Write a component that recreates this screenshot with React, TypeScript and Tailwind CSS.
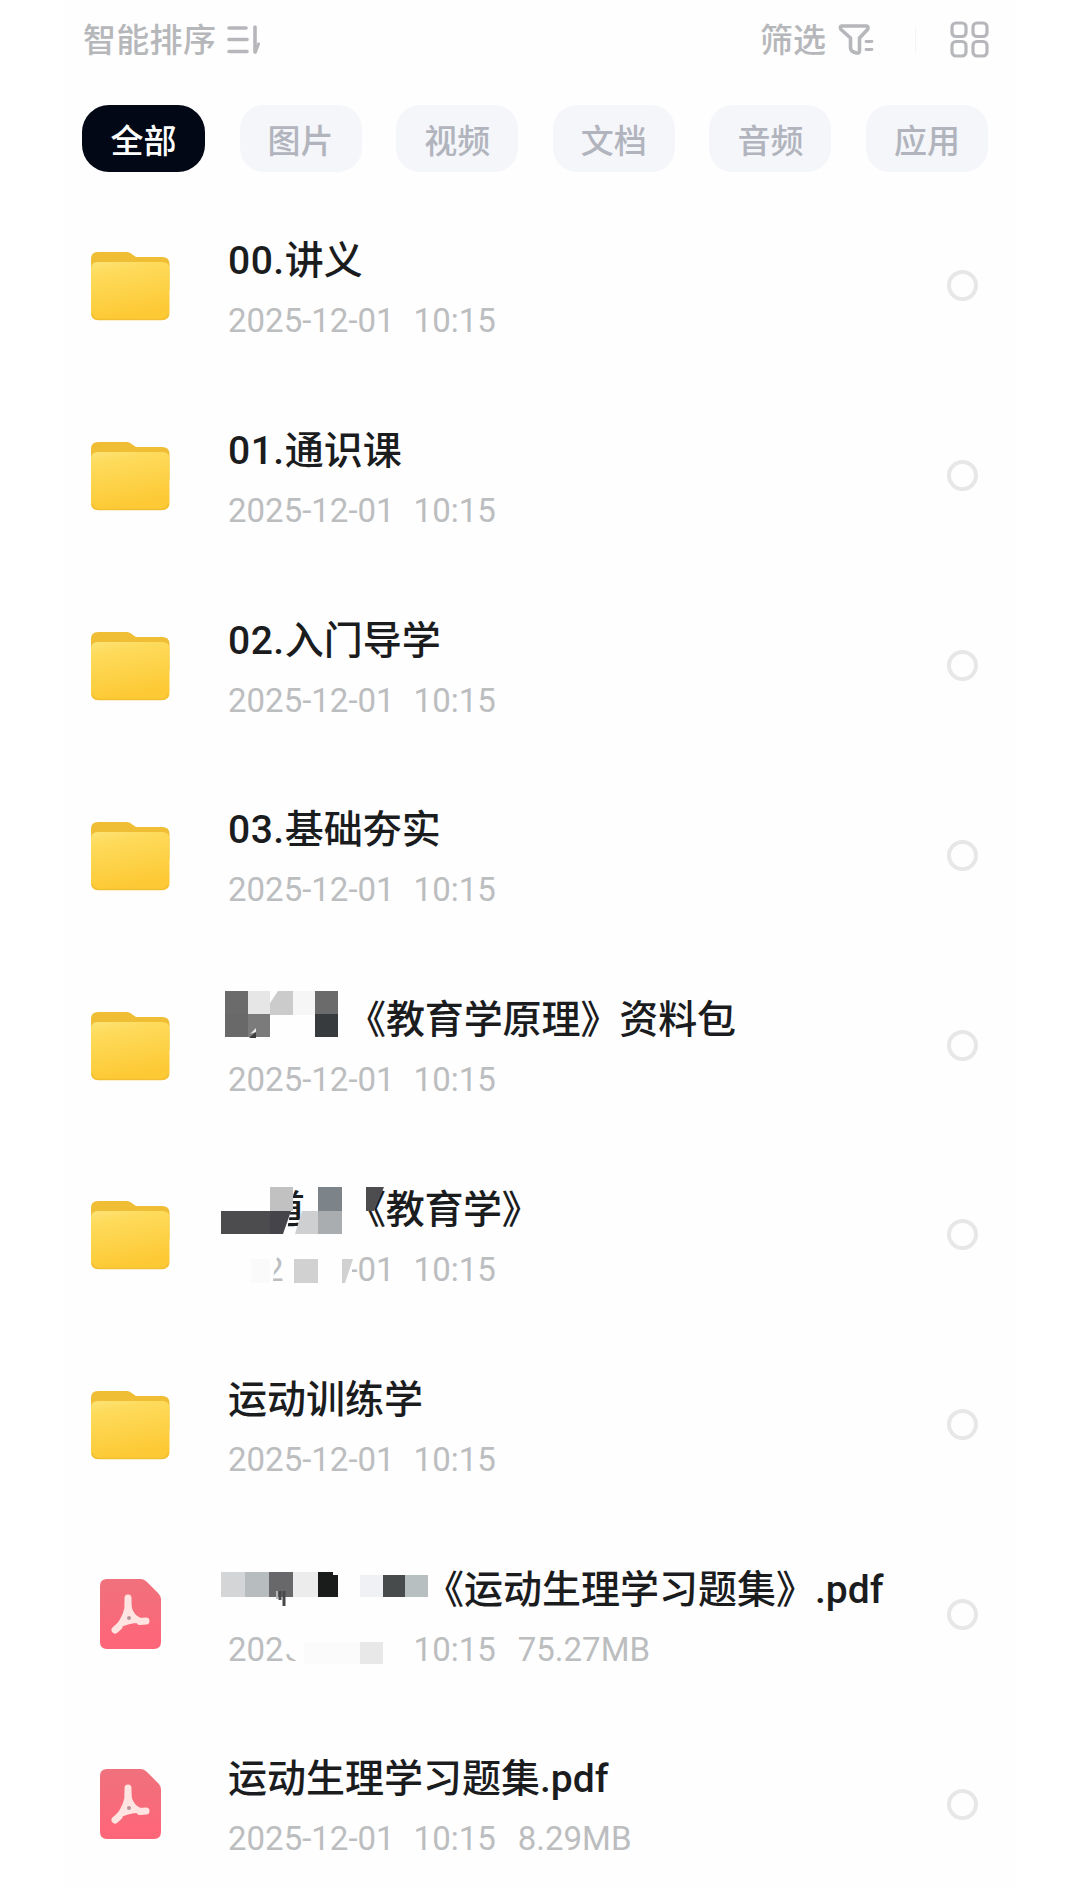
import type { ReactNode } from "react";
import clsx from "clsx";

interface FileItem {
  type: "folder" | "pdf";
  name: ReactNode;
  time: string;
  size?: string;
  cover?: ReactNode;
}

const TABS = ["全部", "图片", "视频", "文档", "音频", "应用"];

function SortIcon() {
  return (
    <svg width="36" height="32" viewBox="0 0 36 32" fill="none" stroke="#b6b7ba" strokeWidth="3.6" strokeLinecap="round">
      <path d="M3 4H20M3 15.5H21M3 27.5H21" />
      <path d="M29 3V28" />
      <path d="M29.5 28L32.5 20" strokeWidth="3" />
    </svg>
  );
}

function FilterIcon() {
  return (
    <svg width="38" height="34" viewBox="0 0 38 34" fill="none" stroke="#b6b7ba" strokeWidth="3.6" strokeLinecap="round" strokeLinejoin="round">
      <path d="M3.5 3H28.5Q31 3.5 29.5 6.5L21.5 15V27.5Q21.5 30.5 18.5 30Q12.5 28.5 12.5 25V15L3 6.5Q1.5 3.5 3.5 3Z" />
      <path d="M28 18.5H34M28 26.5H34" strokeWidth="2.8" />
    </svg>
  );
}

function GridIcon() {
  return (
    <svg width="40" height="38" viewBox="0 0 40 38" fill="none" stroke="#b6b7ba" strokeWidth="3.2">
      <rect x="2" y="2" width="14" height="13.5" rx="4" />
      <rect x="23" y="2" width="14" height="13.5" rx="4" />
      <rect x="2" y="20.5" width="14" height="14.5" rx="4" />
      <rect x="23" y="20.5" width="14" height="14.5" rx="4" />
    </svg>
  );
}

function FolderIcon() {
  return (
    <svg width="80" height="71" viewBox="0 0 80 71">
      <defs>
        <linearGradient id="folderFront" x1="0" y1="0" x2="0.25" y2="1">
          <stop offset="0" stopColor="#fde377" />
          <stop offset="0.2" stopColor="#fedb5c" />
          <stop offset="1" stopColor="#fdc934" />
        </linearGradient>
      </defs>
      <path d="M1 9Q1 2 8 2H37Q40 2 43 5L46 7H72Q79.500 7 79.500 14V40H1Z" fill="#efbe35" />
      <path d="M1 19Q1 12 8 12H72Q79.500 12 79.500 19V63Q79.500 70 72 70H8Q1 70 1 63Z" fill="url(#folderFront)" />
      <path d="M2 64Q3 69.500 9 69.500H71Q77 69.500 78.500 64" fill="none" stroke="#f3bf32" strokeWidth="1.5" />
    </svg>
  );
}

function PdfIcon() {
  return (
    <svg width="80" height="72" viewBox="0 0 80 72">
      <defs>
        <linearGradient id="pdfSheet" x1="0" y1="0" x2="0" y2="1">
          <stop offset="0" stopColor="#f0717d" />
          <stop offset="1" stopColor="#fe6578" />
        </linearGradient>
      </defs>
      <path d="M10 8Q10 1 17 1H51Q54 1 57 4L68 15Q71 18 71 21V64Q71 71 64 71H17Q10 71 10 64Z" fill="url(#pdfSheet)" />
      <g stroke="#ffe4e1" strokeLinecap="round" strokeLinejoin="round">
        <path d="M38 20V27M25 52L29 48.5M50 43.5L56 43" fill="none" strokeWidth="7" />
        <path d="M37 24Q37 37 27 49Q38 42 54 43Q40 40 39 24Z" fill="#ffe4e1" strokeWidth="4" />
      </g>
      <circle cx="39" cy="40" r="2" fill="#b9959b" />
    </svg>
  );
}

// Pixelated blocks hiding part of a row, drawn from the row's top edge
function Cover({ children }: { children: ReactNode }) {
  return (
    <svg className="absolute -left-2 top-0" width="240" height="190" viewBox="0 0 240 190">
      {children}
    </svg>
  );
}

function Numbered({ no, title }: { no: string; title: string }) {
  return (
    <>
      <span className="tracking-[0.5px]">{no}.</span>
      {title}
    </>
  );
}

const FILES: FileItem[] = [
  { type: "folder", name: <Numbered no="00" title="讲义" />, time: "2025-12-01  10:15" },
  { type: "folder", name: <Numbered no="01" title="通识课" />, time: "2025-12-01  10:15" },
  { type: "folder", name: <Numbered no="02" title="入门导学" />, time: "2025-12-01  10:15" },
  { type: "folder", name: <Numbered no="03" title="基础夯实" />, time: "2025-12-01  10:15" },
  {
    type: "folder",
    name: <span className="pl-[119px] tracking-[-0.1px]">《教育学原理》资料包</span>,
    time: "2025-12-01  10:15",
    cover: (
      <Cover>
        <path d="M5 41h23v24H5z" fill="#6b6b6c" />
        <path d="M28 41h22v24H28z" fill="#e6e6e7" />
        <path d="M58 41h15v24H50V53z" fill="#cbcbcb" />
        <path d="M73 41h22v24H73z" fill="#f6f6f6" />
        <path d="M95 41h23v24H95z" fill="#6b6b6c" />
        <path d="M5 64h23v23H5z" fill="#69696a" />
        <path d="M28 64h22v23H28z" fill="#7b7b7c" />
        <path d="M95 64h23v23H95z" fill="#383b3e" />
        <path d="M29 88L36 82V88Z" fill="#3c3c3d" />
        <path d="M30 84L36 78V82Z" fill="#e9e9e9" />
      </Cover>
    ),
  },
  {
    type: "folder",
    name: <span className="pl-[38px]">道<span className="pl-[42px] tracking-[-0.3px]">《教育学》</span></span>,
    time: "2025-12-01  10:15",
    cover: (
      <Cover>
        <path d="M0 40H76L66 96H0Z" fill="#fefefe" />
        <path d="M86 40H126V96H80Z" fill="#fefefe" />
        <path d="M50 47H73V71H50Z" fill="#c1c1c2" />
        <path d="M1 71H50V94H1Z" fill="#4c4c4e" />
        <path d="M50 71H71L63 94H50Z" fill="#44444a" />
        <path d="M82 71H98V94H75Z" fill="#cecfd1" />
        <path d="M98 47H122V71H98Z" fill="#7d8489" />
        <path d="M98 71H122V94H98Z" fill="#a9adb0" />
        <path d="M146 47H164L154 71H146Z" fill="#4d4d4f" />
        <path d="M0 110H53V152H0Z" fill="#fefefe" />
        <path d="M53 112H58L54 132L52 150H50V112Z" fill="#fefefe" />
        <path d="M64 110H132V152H64Z" fill="#fefefe" />
        <path d="M31 119H50V143H31Z" fill="#fafafa" />
        <path d="M74 119H98V143H74Z" fill="#d1d1d2" />
        <path d="M122 119H133L125 143H122Z" fill="#d1d1d2" />
      </Cover>
    ),
  },
  { type: "folder", name: "运动训练学", time: "2025-12-01  10:15" },
  {
    type: "pdf",
    name: <span className="pl-[197px]">《运动生理学习题集》.pdf</span>,
    time: "2025-12-01  10:15",
    size: "75.27MB",
    cover: (
      <Cover>
        <path d="M1 52H25V77H1Z" fill="#d4d5d6" />
        <path d="M25 52H49V77H25Z" fill="#b7bdbf" />
        <path d="M49 52H73V77H49Z" fill="#68686a" />
        <path d="M73 52H98V77H73Z" fill="#ececed" />
        <path d="M98 52H113V55H118V77H98Z" fill="#1a1c1c" />
        <path d="M60 71V80M64 71V86" stroke="#48484a" strokeWidth="3" />
        <path d="M57 71V79" stroke="#b5b5b7" strokeWidth="2" />
        <path d="M140 55H163V77H140Z" fill="#f0f1f4" />
        <path d="M163 55H185V77H163Z" fill="#474b4b" />
        <path d="M185 55H208V77H185Z" fill="#b8bfc0" />
        <path d="M63 112H84V131H63Z" fill="#fefefe" />
        <path d="M72 112H180V152H80L78 142L72 138Z" fill="#fefefe" />
        <path d="M84 122H140V144H84Z" fill="#fbfbfb" />
        <path d="M140 122H163V144H140Z" fill="#e8e8e9" />
      </Cover>
    ),
  },
  { type: "pdf", name: "运动生理学习题集.pdf", time: "2025-12-01  10:15", size: "8.29MB" },
];

function FileRow({ file }: { file: FileItem }) {
  return (
    <li className="flex h-[189.8px] items-center">
      <div className="w-[138px] shrink-0">{file.type === "folder" ? <FolderIcon /> : <PdfIcon />}</div>
      <div className="relative flex h-full flex-1 flex-col pt-[46px]">
        <p className="h-12 whitespace-pre text-[39px] font-medium leading-[48px] text-[#1b1c1e]">{file.name}</p>
        <p className="mt-4 whitespace-pre text-[33px] leading-10 text-[#bcbdbf] [word-spacing:1.3px]">
          {file.time}
          {file.size && <span className="pl-[22px]">{file.size}</span>}
        </p>
        {file.cover}
      </div>
      <span className="size-[31px] shrink-0 rounded-full border-4 border-[#e7e7e8]" />
    </li>
  );
}

export default function App() {
  return (
    <div className="h-[1888px] overflow-hidden bg-white font-[Roboto,'Noto_Sans_CJK_SC',sans-serif]">
      <main className="mx-auto h-full w-[951px] bg-[#fefefe]">
        {/* Sort and filter bar */}
        <header className="flex h-[79px] items-center justify-between pl-[19px] pr-[25px] text-[33px] font-medium text-[#b6b7ba]">
          <button className="flex items-center gap-[10px]">
            <span className="pt-[3px] leading-10 tracking-[0.3px]">智能排序</span>
            <SortIcon />
          </button>
          <div className="flex items-center">
            <button className="flex items-center gap-3">
              <span className="pt-[3px] leading-10">筛选</span>
              <FilterIcon />
            </button>
            <span className="ml-[39px] mr-[34px] h-7 w-px bg-[#f5f5f6]" />
            <GridIcon />
          </div>
        </header>

        {/* Category tabs */}
        <nav className="flex justify-between pl-[18px] pr-[27px] pt-[26px]">
          {TABS.map((tab, i) => (
            <button
              key={tab}
              className={clsx(
                "flex h-[67px] items-center justify-center pt-1.5 text-[33px] font-medium",
                i === 0
                  ? "w-[123px] rounded-[27px] bg-[#020816] text-white"
                  : "w-[122px] rounded-[24px] bg-[#f4f6f9] text-[#b1b4bd]"
              )}
            >
              {tab}
            </button>
          ))}
        </nav>

        {/* File list */}
        <ul className="mt-[19px] pl-[26px] pr-[37px]">
          {FILES.map((file, i) => (
            <FileRow key={i} file={file} />
          ))}
        </ul>
      </main>
    </div>
  );
}
